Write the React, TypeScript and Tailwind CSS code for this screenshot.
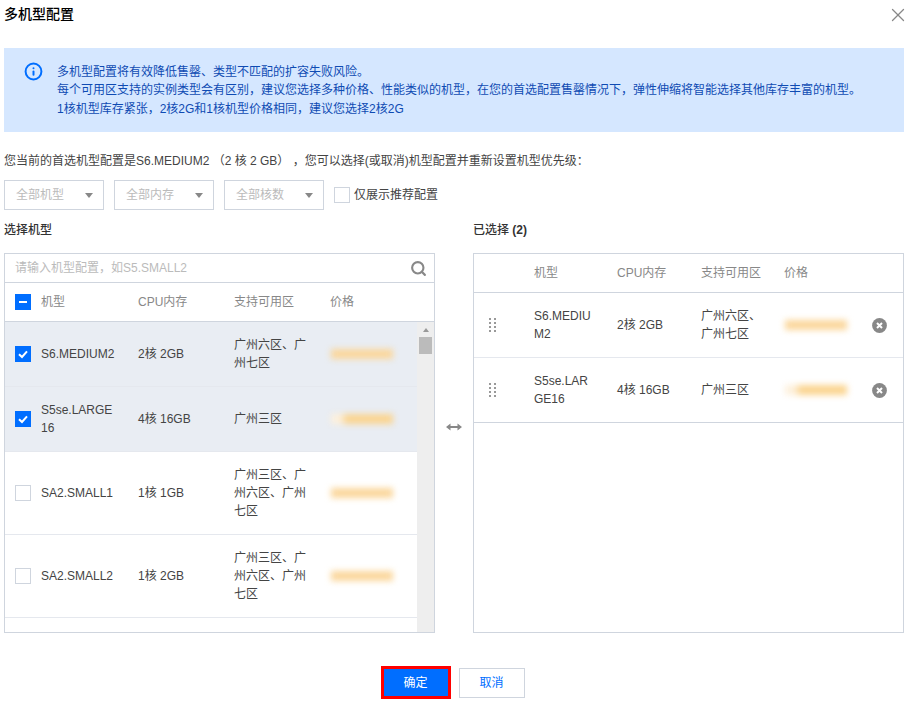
import React from 'react';
import { Info, Search, X } from 'lucide-react';

const FONT = "font-['Liberation_Sans','Noto_Sans_CJK_SC',sans-serif]";

type Row = { name: string; spec: string; zones: string; checked?: boolean; faint?: boolean };

const available: Row[] = [
  { name: 'S6.MEDIUM2', spec: '2核 2GB', zones: '广州六区、广州七区', checked: true },
  { name: 'S5se.LARGE16', spec: '4核 16GB', zones: '广州三区', checked: true, faint: true },
  { name: 'SA2.SMALL1', spec: '1核 1GB', zones: '广州三区、广州六区、广州七区' },
  { name: 'SA2.SMALL2', spec: '1核 2GB', zones: '广州三区、广州六区、广州七区' },
];

const selected: Row[] = [
  { name: 'S6.MEDIUM2', spec: '2核 2GB', zones: '广州六区、广州七区' },
  { name: 'S5se.LARGE16', spec: '4核 16GB', zones: '广州三区', faint: true },
];

const Checkbox = ({ state }: { state: 'on' | 'off' | 'some' }) => {
  if (state === 'off') {
    return <span className="block w-4 h-4 bg-white border border-[#cfd5de]" />;
  }
  return (
    <span className="flex items-center justify-center w-4 h-4 bg-[#006eff]">
      <svg width="12" height="12" viewBox="0 0 12 12" fill="none" stroke="#fff" strokeWidth="2">
        {state === 'on' ? <path d="M2 6.2 5 9l5-5.6" /> : <path d="M2 6h8" />}
      </svg>
    </span>
  );
};

// the prices are blurred out in the screenshot
const Price = ({ faint }: { faint?: boolean }) => (
  <div
    className={`w-[62px] h-[10px] ml-px blur-[3px] ${
      faint
        ? 'bg-linear-to-r from-[#fdf0dc] from-15% to-[#fbd48f] to-25%'
        : 'bg-[#fbd79c]'
    }`}
  />
);

const SelectBox = ({ label }: { label: string }) => (
  <div className="flex items-center justify-between w-[100px] h-[30px] pl-[11px] pr-[10px] border border-[#cfd5de] text-[#bbb]">
    <span>{label}</span>
    <span className="w-0 h-0 border-x-4 border-x-transparent border-t-[5px] border-t-[#888]" />
  </div>
);

const DragDots = () => (
  <div className="grid grid-cols-2 gap-x-[3px] gap-y-[2px] w-[7px]">
    {Array.from({ length: 8 }).map((_, i) => (
      <span key={i} className="block w-[2px] h-[2px] bg-[#999]" />
    ))}
  </div>
);

const RemoveIcon = () => (
  <svg width="15" height="15" viewBox="0 0 15 15">
    <circle cx="7.5" cy="7.5" r="7.4" fill="#888" />
    <path d="M5 5l5 5M10 5l-5 5" stroke="#fff" strokeWidth="2" />
  </svg>
);

const leftCols = 'grid grid-cols-[36px_97px_96px_96px_87px] items-center';
const rightCols = 'grid grid-cols-[60px_83px_84px_83px_88px_1fr] items-center';

export default function App() {
  return (
    <div className={`${FONT} relative w-[911px] h-[705px] bg-white text-xs leading-[18px] text-[#444] overflow-hidden px-1`}>
      <div className="flex items-center justify-between h-[27px]">
        <h2 className="text-sm font-medium text-black">多机型配置</h2>
        <X size={22} strokeWidth={1.4} className="text-[#888] mt-[3px] -mr-[2px]" />
      </div>

      <div className="flex w-[900px] h-[84px] mt-[21px] pt-[14px] pl-[20px] bg-[#d5e7ff] text-[#0f4bb3]">
        <Info size={19} strokeWidth={2.5} className="text-[#006eff] shrink-0" />
        <div className="ml-[14px] mt-[1px] leading-[18.4px]">
          <p>多机型配置将有效降低售罄、类型不匹配的扩容失败风险。</p>
          <p>每个可用区支持的实例类型会有区别，建议您选择多种价格、性能类似的机型，在您的首选配置售罄情况下，弹性伸缩将智能选择其他库存丰富的机型。</p>
          <p>1核机型库存紧张，2核2G和1核机型价格相同，建议您选择2核2G</p>
        </div>
      </div>

      <p className="mt-5">您当前的首选机型配置是S6.MEDIUM2 （2 核 2 GB） ，您可以选择(或取消)机型配置并重新设置机型优先级：</p>

      <div className="flex items-center gap-[10px] mt-[10px]">
        <SelectBox label="全部机型" />
        <SelectBox label="全部内存" />
        <SelectBox label="全部核数" />
        <label className="flex items-center gap-1">
          <Checkbox state="off" />
          <span>仅展示推荐配置</span>
        </label>
      </div>

      <div className="flex mt-[11px]">
        <div className="w-[431px]">
          <h3 className="font-medium text-[#333] h-[32px]">选择机型</h3>
          <div className="h-[380px] border border-[#cfd5de] overflow-hidden">
            <div className="flex items-center justify-between h-[29px] pl-[10px] pr-[7px] border-b border-[#cfd5de] text-[#bbb]">
              <span>请输入机型配置，如S5.SMALL2</span>
              <Search size={17} strokeWidth={3} className="text-[#888]" />
            </div>
            <div className={`${leftCols} h-[39px] border-b border-[#cfd5de] text-[#888]`}>
              <div className="pl-[10px]"><Checkbox state="some" /></div>
              <span>机型</span>
              <span>CPU内存</span>
              <span>支持可用区</span>
              <span>价格</span>
            </div>
            <div className="flex h-[310px]">
              <div className="w-[412px]">
                {available.map((r) => (
                  <div
                    key={r.name}
                    className={`${leftCols} border-b border-[#e5e8ee] ${r.checked ? 'h-[65px] bg-[#e9edf3]' : 'h-[83px]'}`}
                  >
                    <div className="pl-[10px]"><Checkbox state={r.checked ? 'on' : 'off'} /></div>
                    <span className="pr-5 break-all">{r.name}</span>
                    <span>{r.spec}</span>
                    <span className="pr-5">{r.zones}</span>
                    <Price faint={r.faint} />
                  </div>
                ))}
              </div>
              <div className="flex-1 bg-[#eee]">
                <div className="flex justify-center pt-[6px]">
                  <span className="w-0 h-0 border-x-[3px] border-x-transparent border-b-4 border-b-[#999]" />
                </div>
                <div className="w-[13px] h-[17px] mt-[5px] mx-auto bg-[#bbb]" />
              </div>
            </div>
          </div>
        </div>

        <div className="flex items-center justify-center w-[38px]">
          <svg width="16" height="8" viewBox="0 0 16 8" fill="#888">
            <path d="M0 4l4.5-3.5v2.6h7V.5L16 4l-4.5 3.5V4.9h-7v2.6z" />
          </svg>
        </div>

        <div className="w-[431px]">
          <h3 className="font-medium text-[#333] h-[32px]">已选择 <span className="font-bold">(2)</span></h3>
          <div className="h-[380px] border border-[#cfd5de] overflow-hidden">
            <div className={`${rightCols} h-[39px] border-b border-[#cfd5de] text-[#888]`}>
              <span />
              <span>机型</span>
              <span>CPU内存</span>
              <span>支持可用区</span>
              <span>价格</span>
            </div>
            {selected.map((r, i) => (
              <div
                key={r.name}
                className={`${rightCols} h-[65px] border-b ${i === selected.length - 1 ? 'border-[#cfd5de]' : 'border-[#e5e8ee]'}`}
              >
                <div className="pl-[15px]"><DragDots /></div>
                <span className="pr-5 break-all">{r.name}</span>
                <span>{r.spec}</span>
                <span className="pr-5">{r.zones}</span>
                <Price faint={r.faint} />
                <RemoveIcon />
              </div>
            ))}
          </div>
        </div>
      </div>

      <div className="flex justify-center items-center gap-2 mt-[33px] pr-[6px]">
        <button className="w-[70px] h-[33px] bg-[#006eff] text-white border-[3px] border-[#f00]">确定</button>
        <button className="w-[66px] h-[30px] bg-white text-[#006eff] border border-[#cfd5de]">取消</button>
      </div>
    </div>
  );
}
